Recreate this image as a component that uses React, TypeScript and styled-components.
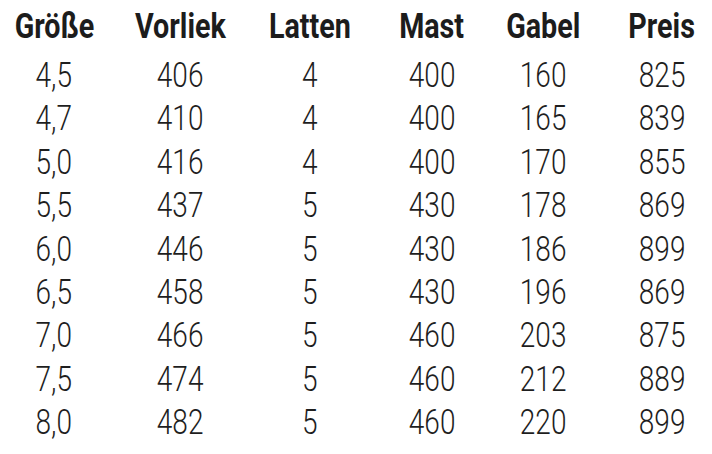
import React from 'react';
import styled, { createGlobalStyle } from 'styled-components';

const GlobalStyle = createGlobalStyle`
  html, body {
    margin: 0;
    padding: 0;
    background: #ffffff;
  }
  body {
    font-family: Roboto, "Liberation Sans", sans-serif;
    overflow: hidden;
  }
`;

type Row = {
  size: string;
  luff: string;
  battens: string;
  mast: string;
  boom: string;
  price: string;
};

const rows: Row[] = [
  { size: '4,5', luff: '406', battens: '4', mast: '400', boom: '160', price: '825' },
  { size: '4,7', luff: '410', battens: '4', mast: '400', boom: '165', price: '839' },
  { size: '5,0', luff: '416', battens: '4', mast: '400', boom: '170', price: '855' },
  { size: '5,5', luff: '437', battens: '5', mast: '430', boom: '178', price: '869' },
  { size: '6,0', luff: '446', battens: '5', mast: '430', boom: '186', price: '899' },
  { size: '6,5', luff: '458', battens: '5', mast: '430', boom: '196', price: '869' },
  { size: '7,0', luff: '466', battens: '5', mast: '460', boom: '203', price: '875' },
  { size: '7,5', luff: '474', battens: '5', mast: '460', boom: '212', price: '889' },
  { size: '8,0', luff: '482', battens: '5', mast: '460', boom: '220', price: '899' },
];

const headers = ['Größe', 'Vorliek', 'Latten', 'Mast', 'Gabel', 'Preis'];

// Spaltenbreiten so gewählt, dass die Mitten wie im Bild liegen
const Table = styled.div`
  width: 734px;
  display: grid;
  grid-template-columns: 108px 144px 116px 128px 94px 144px;
  padding-top: 7px;
`;

const HeadCell = styled.div`
  font-size: 35px;
  font-weight: 700;
  line-height: 40px;
  color: #1c1c1c;
  text-align: center;
  margin-bottom: 7px;
`;

const Cell = styled.div`
  font-size: 35px;
  font-weight: 300;
  line-height: 43.4px;
  color: #1e1e1e;
  text-align: center;
`;

/* schmale DIN-Optik: Schrift horizontal stauchen */
const Narrow = styled.span<{ $scale: number }>`
  display: inline-block;
  transform: scaleX(${(p) => p.$scale});
  transform-origin: center;
`;

export default function App() {
  return (
    <>
      <GlobalStyle />
      <Table>
        {headers.map((h) => (
          <HeadCell key={h}>
            <Narrow $scale={0.82}>{h}</Narrow>
          </HeadCell>
        ))}
        {rows.map((r) => (
          <React.Fragment key={r.size}>
            <Cell><Narrow $scale={0.8}>{r.size}</Narrow></Cell>
            <Cell><Narrow $scale={0.8}>{r.luff}</Narrow></Cell>
            <Cell><Narrow $scale={0.8}>{r.battens}</Narrow></Cell>
            <Cell><Narrow $scale={0.8}>{r.mast}</Narrow></Cell>
            <Cell><Narrow $scale={0.8}>{r.boom}</Narrow></Cell>
            <Cell><Narrow $scale={0.8}>{r.price}</Narrow></Cell>
          </React.Fragment>
        ))}
      </Table>
    </>
  );
}
